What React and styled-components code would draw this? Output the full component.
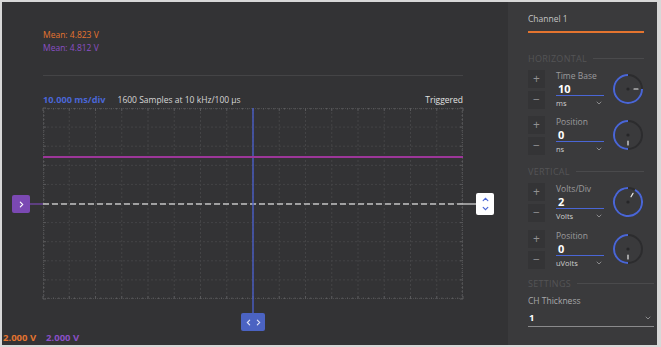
import React from "react";
import styled, { createGlobalStyle } from "styled-components";

const GlobalStyle = createGlobalStyle`
  html, body {
    margin: 0;
    padding: 0;
    background: #ffffff;
  }
  * {
    box-sizing: border-box;
  }
`;

const FONT = `"Open Sans", "Noto Sans", sans-serif`;
const ORANGE = "#e4742f";
const PURPLE = "#8a4fc6";
const BLUE = "#4a66d6";

const Frame = styled.div`
  display: flex;
  width: 661px;
  height: 347px;
  border: 2px solid #d8d8d8;
  border-right-width: 4px;
  background: #333335;
  font-family: ${FONT};
  overflow: hidden;
`;

const Scope = styled.div`
  display: flex;
  flex-direction: column;
  width: 506px;
  background: #333335;
`;

const ScopeBody = styled.div`
  display: flex;
  flex-direction: column;
  padding: 26px 0 0 41px;
  width: 461px;
`;

const Mean = styled.div`
  font-size: 8.5px;
  line-height: 13px;
  color: ${(p) => p.$color};
`;

const Divider = styled.div`
  height: 1px;
  background: #444446;
  margin: 21px 0 0;
`;

const InfoRow = styled.div`
  display: flex;
  align-items: center;
  gap: 12px;
  margin-top: 17px;
  height: 12px;
  font-size: 8.5px;
  color: #d6d6d6;
`;

const Rate = styled.span`
  color: ${BLUE};
  font-size: 9.2px;
  font-weight: 700;
`;

const Triggered = styled.span`
  margin-left: auto;
  color: #e2e2e2;
`;

const Plot = styled.div`
  position: relative;
  width: 420px;
  height: 191px;
  margin-top: 3px;
  svg {
    display: block;
    overflow: visible;
  }
`;

const Trace = styled.div`
  position: absolute;
  left: 0;
  right: 0;
  top: ${(p) => p.$top}px;
  height: 2px;
  background: ${(p) => p.$color};
`;

const Marker = styled.div`
  position: absolute;
  display: flex;
  align-items: center;
  justify-content: center;
  border-radius: 2px;
  color: #fff;
  font-size: 9px;
  line-height: 1;
`;

const LevelMarker = styled(Marker)`
  left: -31px;
  top: 87px;
  width: 18px;
  height: 18px;
  background: #7b49b3;
`;

const TriggerMarker = styled(Marker)`
  left: 433px;
  top: 85px;
  width: 18px;
  height: 22px;
  background: #ffffff;
  flex-direction: column;
  gap: 2px;
`;

const TimeMarker = styled(Marker)`
  left: 198px;
  top: 205px;
  width: 24px;
  height: 18px;
  background: #4b63c2;
  gap: 3px;
`;

const Footer = styled.div`
  display: flex;
  gap: 10px;
  margin-top: auto;
  padding: 0 0 1px 1px;
  font-size: 9.5px;
  font-weight: 700;
  line-height: 12px;
`;

const Scale = styled.span`
  color: ${(p) => p.$color};
`;

const Panel = styled.div`
  display: flex;
  flex-direction: column;
  width: 149px;
  padding: 10px 11px 0 20px;
  background: #3a3a3c;
  color: #bdbdbd;
  font-size: 8.5px;
`;

const ChannelTab = styled.div`
  width: 116px;
  height: 21px;
  line-height: 14px;
  color: #c4c4c4;
  border-bottom: 2px solid ${ORANGE};
`;

const Section = styled.div`
  display: flex;
  align-items: center;
  gap: 6px;
  margin-top: ${(p) => p.$top}px;
  height: 12px;
  width: ${(p) => (p.$wide ? 126 : 116)}px;
  color: #545456;
  font-size: 9px;
  letter-spacing: 0.3px;
  &::after {
    content: "";
    flex: 1;
    height: 1px;
    background: #4a4a4c;
  }
`;

const Row = styled.div`
  display: flex;
  align-items: flex-start;
  margin-top: ${(p) => p.$top}px;
  height: 39px;
`;

const Steppers = styled.div`
  display: flex;
  flex-direction: column;
  gap: 3px;
  width: 17px;
`;

const Step = styled.div`
  display: flex;
  align-items: center;
  justify-content: center;
  height: 18px;
  background: #343436;
  color: #909092;
  font-size: 12px;
  line-height: 1;
`;

const Field = styled.div`
  display: flex;
  flex-direction: column;
  width: 48px;
  margin-left: 11px;
`;

const Label = styled.div`
  height: 12px;
  line-height: 12px;
  color: #9a9a9c;
  font-size: 8.5px;
`;

const Value = styled.div`
  height: 14px;
  padding-left: 2px;
  line-height: 14px;
  color: #ffffff;
  font-size: 11px;
  font-weight: 700;
  border-bottom: 1px solid ${BLUE};
`;

const Unit = styled.div`
  display: flex;
  align-items: center;
  justify-content: space-between;
  height: 13px;
  color: #cfcfcf;
  font-size: 7.5px;
  padding-right: 2px;
`;

const KnobWrap = styled.div`
  margin: 3px 0 0 8px;
  width: 32px;
  height: 32px;
`;

const Thickness = styled.div`
  margin-top: 6px;
  color: #a8a8aa;
  font-size: 8.5px;
  line-height: 12px;
`;

const ThicknessSelect = styled.div`
  display: flex;
  align-items: center;
  justify-content: space-between;
  width: 126px;
  height: 18px;
  margin-top: 2px;
  padding: 0 3px 0 1px;
  color: #ffffff;
  font-size: 9.5px;
  font-weight: 700;
  border-bottom: 1px solid #8a8a8c;
`;

const Chevron = ({ dir = "down", color = "#8a8a8c", size = 6 }) => {
  const d = {
    down: "M1 2 L3 4 L5 2",
    up: "M1 4 L3 2 L5 4",
    left: "M4 1 L2 3 L4 5",
    right: "M2 1 L4 3 L2 5",
  }[dir];
  return (
    <svg width={size} height={size} viewBox="0 0 6 6">
      <path d={d} fill="none" stroke={color} strokeWidth="1" strokeLinecap="round" />
    </svg>
  );
};

const Knob = ({ angle }) => {
  const cx = 16;
  const cy = 16;
  const r = 14;
  const rad = (angle * Math.PI) / 180;
  const ex = cx - r * Math.sin(rad);
  const ey = cy - r * Math.cos(rad);
  const large = angle > 180 ? 1 : 0;
  const ix1 = cx - 6 * Math.sin(rad);
  const iy1 = cy - 6 * Math.cos(rad);
  const ix2 = cx - 10 * Math.sin(rad);
  const iy2 = cy - 10 * Math.cos(rad);
  return (
    <KnobWrap>
      <svg width="32" height="32" viewBox="0 0 32 32">
        <circle cx={cx} cy={cy} r={r} fill="none" stroke="#2c2c2e" strokeWidth="2" />
        <path d={`M${cx} ${cy - r} A${r} ${r} 0 ${large} 0 ${ex.toFixed(2)} ${ey.toFixed(2)}`} fill="none" stroke={BLUE} strokeWidth="2" />
        <circle cx={cx} cy={cy} r="1.6" fill="#262628" />
        <line x1={ix1} y1={iy1} x2={ix2} y2={iy2} stroke="#e8e8e8" strokeWidth="1.2" strokeLinecap="round" />
      </svg>
    </KnobWrap>
  );
};

const Control = ({ top, label, value, unit, angle }) => (
  <Row $top={top}>
    <Steppers>
      <Step>+</Step>
      <Step>−</Step>
    </Steppers>
    <Field>
      <Label>{label}</Label>
      <Value>{value}</Value>
      <Unit>
        <span>{unit}</span>
        <Chevron />
      </Unit>
    </Field>
    <Knob angle={angle} />
  </Row>
);

const W = 420;
const H = 191;
const COLS = 16;
const ROWS = 10;

const Grid = () => {
  const dx = W / COLS;
  const dy = H / ROWS;
  const els = [];
  for (let i = 1; i < COLS; i++) {
    els.push(<line key={`v${i}`} x1={i * dx} y1={0} x2={i * dx} y2={H} stroke="#444446" strokeDasharray="2 2" />);
  }
  for (let j = 1; j < ROWS; j++) {
    els.push(<line key={`h${j}`} x1={0} y1={j * dy} x2={W} y2={j * dy} stroke="#444446" strokeDasharray="2 2" />);
  }
  for (let k = 0; k <= COLS * 5; k++) {
    const x = (k * W) / (COLS * 5);
    const len = k % 5 === 0 ? 3 : 1.5;
    els.push(<line key={`tt${k}`} x1={x} y1={0} x2={x} y2={len} stroke="#5a5a5c" />);
    els.push(<line key={`tb${k}`} x1={x} y1={H} x2={x} y2={H - len} stroke="#5a5a5c" />);
  }
  for (let k = 0; k <= ROWS * 5; k++) {
    const y = (k * H) / (ROWS * 5);
    const len = k % 5 === 0 ? 3 : 1.5;
    els.push(<line key={`tl${k}`} x1={0} y1={y} x2={len} y2={y} stroke="#5a5a5c" />);
    els.push(<line key={`tr${k}`} x1={W} y1={y} x2={W - len} y2={y} stroke="#5a5a5c" />);
  }
  return (
    <svg width={W} height={H} viewBox={`0 0 ${W} ${H}`}>
      <line x1={0} y1={0.5} x2={W} y2={0.5} stroke="#4c4c4e" strokeDasharray="1 1" />
      <line x1={0} y1={H - 0.5} x2={W} y2={H - 0.5} stroke="#4c4c4e" strokeDasharray="1 1" />
      <line x1={0.5} y1={0} x2={0.5} y2={H} stroke="#4c4c4e" strokeDasharray="1 1" />
      <line x1={W - 0.5} y1={0} x2={W - 0.5} y2={H} stroke="#4c4c4e" strokeDasharray="1 1" />
      {els}
      <line x1={-14} y1={96} x2={0} y2={96} stroke="#7b49b3" strokeWidth="1.2" />
      <line x1={0} y1={96} x2={W} y2={96} stroke="#c4c4c4" strokeWidth="1.4" strokeDasharray="6 3" />
      <line x1={W} y1={96} x2={W + 13} y2={96} stroke="#c4c4c4" strokeWidth="1.4" />
      <line x1={210} y1={0} x2={210} y2={205} stroke="#4a5ec8" strokeWidth="1.4" />
    </svg>
  );
};

export default function App() {
  return (
    <>
      <GlobalStyle />
      <Frame>
        <Scope>
          <ScopeBody>
            <Mean $color={ORANGE}>Mean: 4.823 V</Mean>
            <Mean $color={PURPLE}>Mean: 4.812 V</Mean>
            <Divider />
            <InfoRow>
              <Rate>10.000 ms/div</Rate>
              <span>1600 Samples at 10 kHz/100 µs</span>
              <Triggered>Triggered</Triggered>
            </InfoRow>
            <Plot>
              <Grid />
              <Trace $top={48} $color="#9c3699" />
              <LevelMarker>
                <Chevron dir="right" color="#ffffff" size={7} />
              </LevelMarker>
              <TriggerMarker>
                <Chevron dir="up" color={BLUE} size={7} />
                <Chevron dir="down" color={BLUE} size={7} />
              </TriggerMarker>
              <TimeMarker>
                <Chevron dir="left" color="#dfe3f7" size={7} />
                <Chevron dir="right" color="#dfe3f7" size={7} />
              </TimeMarker>
            </Plot>
          </ScopeBody>
          <Footer>
            <Scale $color={ORANGE}>2.000 V</Scale>
            <Scale $color={PURPLE}>2.000 V</Scale>
          </Footer>
        </Scope>
        <Panel>
          <ChannelTab>Channel 1</ChannelTab>
          <Section $top={19}>HORIZONTAL</Section>
          <Control top={6} label="Time Base" value="10" unit="ms" angle={270} />
          <Control top={7} label="Position" value="0" unit="ns" angle={180} />
          <Section $top={10}>VERTICAL</Section>
          <Control top={6} label="Volts/Div" value="2" unit="Volts" angle={330} />
          <Control top={8} label="Position" value="0" unit="uVolts" angle={180} />
          <Section $top={8} $wide>SETTINGS</Section>
          <Thickness>CH Thickness</Thickness>
          <ThicknessSelect>
            <span>1</span>
            <Chevron />
          </ThicknessSelect>
        </Panel>
      </Frame>
    </>
  );
}
